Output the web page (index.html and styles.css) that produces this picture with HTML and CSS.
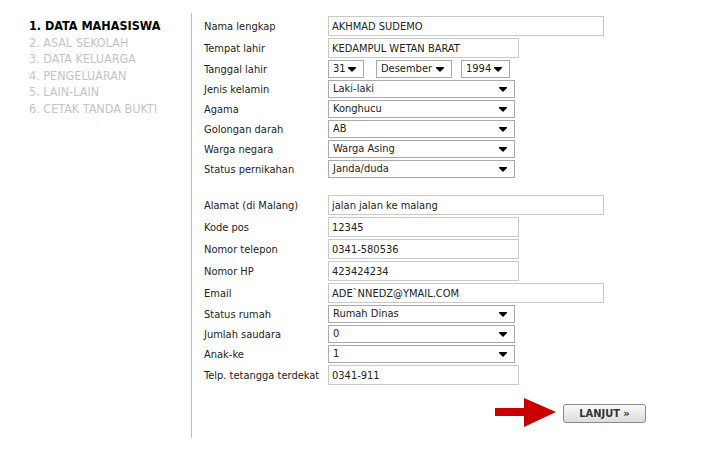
FILE: index.html
```html
<!DOCTYPE html>
<html>
<head>
<meta charset="utf-8">
<link rel="stylesheet" href="styles.css">
</head>
<body>
<div class="page">
  <ul class="steps">
    <li class="active">1. DATA MAHASISWA</li>
    <li>2. ASAL SEKOLAH</li>
    <li>3. DATA KELUARGA</li>
    <li>4. PENGELUARAN</li>
    <li>5. LAIN-LAIN</li>
    <li>6. CETAK TANDA BUKTI</li>
  </ul>
  <div class="form">
    <div class="row"><span class="lbl">Nama lengkap</span><input class="txt long" value="AKHMAD SUDEMO"></div>
    <div class="row"><span class="lbl">Tempat lahir</span><input class="txt mid" value="KEDAMPUL WETAN BARAT"></div>
    <div class="row sr"><span class="lbl">Tanggal lahir</span>
      <span class="sel d1">31</span><span class="sel d2">Desember</span><span class="sel d3">1994</span></div>
    <div class="row sr"><span class="lbl">Jenis kelamin</span><span class="sel wide">Laki-laki</span></div>
    <div class="row sr"><span class="lbl">Agama</span><span class="sel wide">Konghucu</span></div>
    <div class="row sr"><span class="lbl">Golongan darah</span><span class="sel wide">AB</span></div>
    <div class="row sr"><span class="lbl">Warga negara</span><span class="sel wide">Warga Asing</span></div>
    <div class="row sr"><span class="lbl">Status pernikahan</span><span class="sel wide">Janda/duda</span></div>
    <div class="spacer"></div>
    <div class="row"><span class="lbl">Alamat (di Malang)</span><input class="txt long" value="jalan jalan ke malang"></div>
    <div class="row"><span class="lbl">Kode pos</span><input class="txt mid" value="12345"></div>
    <div class="row"><span class="lbl">Nomor telepon</span><input class="txt mid" value="0341-580536"></div>
    <div class="row"><span class="lbl">Nomor HP</span><input class="txt mid" value="423424234"></div>
    <div class="row"><span class="lbl">Email</span><input class="txt long" value="ADE`NNEDZ@YMAIL.COM"></div>
    <div class="row sr"><span class="lbl">Status rumah</span><span class="sel wide">Rumah Dinas</span></div>
    <div class="row sr"><span class="lbl">Jumlah saudara</span><span class="sel wide">0</span></div>
    <div class="row sr"><span class="lbl">Anak-ke</span><span class="sel wide">1</span></div>
    <div class="row"><span class="lbl">Telp. tetangga terdekat</span><input class="txt mid" value="0341-911"></div>
    <div class="actions">
      <svg class="arrow" width="62" height="30" viewBox="0 0 62 30"><polygon points="0,10 29,10 29,0 61,14 29,29 29,18 0,18" fill="#c80000"/></svg>
      <button class="btn">LANJUT &raquo;</button>
    </div>
  </div>
</div>
</body>
</html>
```
FILE: styles.css
```css
html, body { margin: 0; padding: 0; background: #fff; }
body { font-family: "DejaVu Sans Condensed", "DejaVu Sans", sans-serif; font-size: 11px; color: #222; }
.page { display: flex; padding-top: 13px; }
.steps { list-style: none; margin: 0; padding: 5px 0 0 29px; width: 162px; font-size: 12.5px; }
.steps li { height: 16.6px; line-height: 16px; color: #c4c4c4; white-space: nowrap; }
.steps li.active { color: #000; font-weight: bold; }
.form { border-left: 1px solid #9fcadb; height: 425px; padding: 3px 0 0 12px; width: 500px; box-sizing: border-box; }
.row { display: flex; align-items: center; height: 20px; margin-bottom: 2px; }
.row.sr { height: 18px; }
.lbl { width: 124px; flex: none; white-space: nowrap; }
.txt { box-sizing: border-box; height: 20px; border: 1px solid #c9c9c9; padding: 0 3px; font: inherit; color: #222; margin: 0; outline: none; }
.long { width: 276px; }
.mid { width: 191px; }
.sel { position: relative; box-sizing: border-box; flex: none; height: 18px; line-height: 16px; border: 1px solid #a9a9a9; padding: 0 4px; display: inline-block; color: #222; }
.sel::after { content: ""; position: absolute; right: 7px; top: 7px; width: 0; height: 0; border-left: 4px solid transparent; border-right: 4px solid transparent; border-top: 4px solid #000; }
.sel::before { content: ""; position: absolute; right: 7px; top: 6px; width: 8px; height: 1px; background: #000; }
.wide { width: 187px; }
.d1 { width: 36px; margin-right: 12px; }
.d2 { width: 76px; margin-right: 9px; }
.d3 { width: 49px; }
.spacer { height: 15px; }
.actions { display: flex; align-items: center; justify-content: flex-end; width: 442px; margin-top: 13px; }
.arrow { display: block; margin-right: 6px; }
.btn { width: 83px; height: 19px; border: 1px solid #8a8a8a; border-radius: 3px; background: linear-gradient(#fafafa, #dcdcdc); font-family: "DejaVu Sans Condensed", sans-serif; font-weight: bold; font-size: 11px; color: #333; padding: 0; }
```
